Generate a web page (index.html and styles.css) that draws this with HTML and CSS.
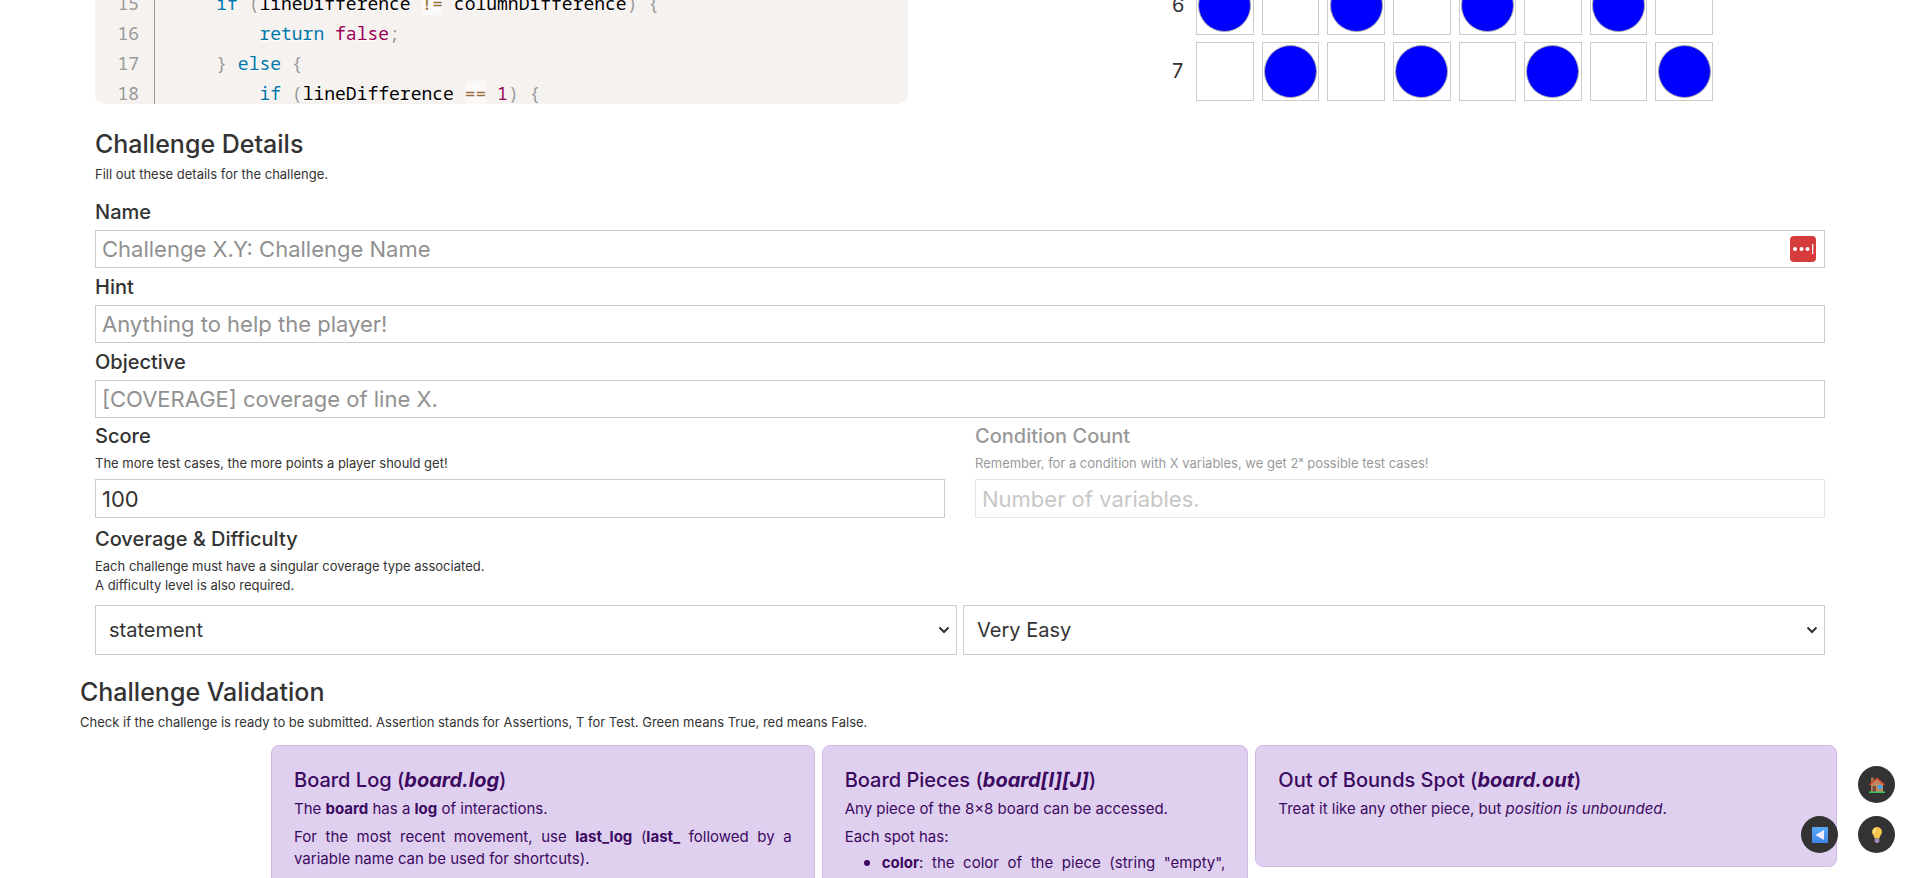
FILE: index.html
```
<!DOCTYPE html>
<html lang="en">
<head>
<meta charset="utf-8">
<title>Create Challenge</title>
<link rel="stylesheet" href="styles.css">
</head>
<body>
<main class="page">
  <section class="workspace">
    <div class="editor">
      <ol class="gutter"><li>15</li><li>16</li><li>17</li><li>18</li></ol>
<pre class="code"><code>    <span class="kw">if</span> <span class="pn">(</span>lineDifference <span class="op">!=</span> columnDifference<span class="pn">)</span> <span class="pn">{</span>
        <span class="kw">return</span> <span class="lit">false</span><span class="pn">;</span>
    <span class="pn">}</span> <span class="kw">else</span> <span class="pn">{</span>
        <span class="kw">if</span> <span class="pn">(</span>lineDifference <span class="op">==</span> <span class="lit">1</span><span class="pn">)</span> <span class="pn">{</span></code></pre>
    </div>
    <div class="board">
      <span class="row-label">6</span>
      <span class="cell"><i class="piece"></i></span><span class="cell"></span>
      <span class="cell"><i class="piece"></i></span><span class="cell"></span>
      <span class="cell"><i class="piece"></i></span><span class="cell"></span>
      <span class="cell"><i class="piece"></i></span><span class="cell"></span>
      <span class="row-label">7</span>
      <span class="cell"></span><span class="cell"><i class="piece"></i></span>
      <span class="cell"></span><span class="cell"><i class="piece"></i></span>
      <span class="cell"></span><span class="cell"><i class="piece"></i></span>
      <span class="cell"></span><span class="cell"><i class="piece"></i></span>
    </div>
  </section>

  <form class="details">
    <h2 class="title">Challenge Details</h2>
    <p class="note">Fill out these details for the challenge.</p>

    <div class="field first">
      <label class="label" for="name">Name</label>
      <div class="input-wrap">
        <input class="input" id="name" type="text" placeholder="Challenge X.Y: Challenge Name">
        <svg class="autofill" viewBox="0 0 26 26" aria-hidden="true">
          <rect width="26" height="26" rx="4" fill="#d63c3c"/>
          <circle cx="5" cy="13" r="2" fill="#fff"/><circle cx="11.500" cy="13" r="2" fill="#fff"/><circle cx="17.500" cy="13" r="2" fill="#fff"/>
          <rect x="22" y="8" width="1.300" height="10" fill="#fff"/>
        </svg>
      </div>
    </div>
    <div class="field">
      <label class="label" for="hint">Hint</label>
      <input class="input" id="hint" type="text" placeholder="Anything to help the player!">
    </div>
    <div class="field">
      <label class="label" for="objective">Objective</label>
      <input class="input" id="objective" type="text" placeholder="[COVERAGE] coverage of line X.">
    </div>
    <div class="pair">
      <div class="field">
        <label class="label" for="score">Score</label>
        <p class="note">The more test cases, the more points a player should get!</p>
        <input class="input" id="score" type="text" value="100">
      </div>
      <div class="field disabled">
        <label class="label" for="conditions">Condition Count</label>
        <p class="note">Remember, for a condition with X variables, we get 2ˣ possible test cases!</p>
        <input class="input" id="conditions" type="text" placeholder="Number of variables." disabled>
      </div>
    </div>
    <div class="levels">
      <h3 class="label">Coverage &amp; Difficulty</h3>
      <p class="note">Each challenge must have a singular coverage type associated.<br>A difficulty level is also required.</p>
      <div class="selects">
        <select class="select" aria-label="Coverage"><option>statement</option></select>
        <select class="select" aria-label="Difficulty"><option>Very Easy</option></select>
      </div>
    </div>
  </form>

  <section class="validation">
    <h2 class="title">Challenge Validation</h2>
    <p class="note">Check if the challenge is ready to be submitted. Assertion stands for Assertions, T for Test. Green means True, red means False.</p>
    <div class="cards">
      <article class="card">
        <h3 class="card-title">Board Log (<em>board.log</em>)</h3>
        <p>The <b>board</b> has a <b>log</b> of interactions.</p>
        <p>For the most recent movement, use <b>last_log</b> (<b>last_</b> followed by a variable name can be used for shortcuts).</p>
      </article>
      <article class="card">
        <h3 class="card-title">Board Pieces (<em>board[I][J]</em>)</h3>
        <p>Any piece of the 8×8 board can be accessed.</p>
        <p>Each spot has:</p>
        <ul><li><b>color</b>: the color of the piece (string "empty", "red", or "blue").</li></ul>
      </article>
      <article class="card short">
        <h3 class="card-title">Out of Bounds Spot (<em>board.out</em>)</h3>
        <p>Treat it like any other piece, but <i>position is unbounded</i>.</p>
      </article>
    </div>
  </section>
</main>

<nav class="dock" aria-label="Shortcuts">
  <button class="dock-button home" type="button" aria-label="Home">
    <svg viewBox="0 0 16 16"><path fill="#a8754f" d="M2 .5h2.500v5H2z"/><path fill="#c08a60" d="M2 7.500 8 2l6 5.500V15H2z"/><path fill="#7a4a3a" d="M3.500 9H7v6H3.500z"/><path fill="#41a6ee" d="M9 8h4v4H9z"/><path fill="none" stroke="#e2482d" stroke-width="1.500" d="M.5 8 8 1.500 15.500 8"/><path fill="#35c463" d="M0 14.500h16V16H0z"/></svg>
  </button>
  <button class="dock-button back" type="button" aria-label="Back">
    <svg viewBox="0 0 16 16"><defs><linearGradient id="sky" x2="0" y2="1"><stop stop-color="#58acf8"/><stop offset="1" stop-color="#3f85e6"/></linearGradient></defs><rect width="16" height="16" rx="1" fill="url(#sky)"/><path fill="#f1edff" d="M12 3v10L3.500 8z"/></svg>
  </button>
  <button class="dock-button idea" type="button" aria-label="Hint">
    <svg viewBox="0 0 16 16"><path fill="#f7c64b" d="M8 0a5 5 0 0 1 5 5c0 2.500-2.300 3.600-2.600 6.500H5.600C5.300 8.600 3 7.500 3 5a5 5 0 0 1 5-5z"/><path fill="#ffe79a" d="M7 1.500c-2 .3-3 2-2.500 4 .5 1.500 1.500 1 1.800-.5z"/><path fill="#a78cb8" d="M5.700 11.500h4.600v3L9 16H7l-1.300-1.500z"/></svg>
  </button>
</nav>
</body>
</html>
```

FILE: styles.css
```
* { box-sizing: border-box; }
html { height: 100%; }
body {
  margin: 0;
  height: 100%;
  overflow: hidden;
  background: #fff;
  color: #333;
  font: 16px/24px Inter, "Noto Sans", sans-serif;
}
h2, h3, p, ul, ol, pre { margin: 0; padding: 0; }

.page { padding: 0 80px; }

.workspace {
  display: grid;
  grid-template-columns: 813px 1fr;
  grid-template-rows: 104px;
  align-items: end;
  padding: 0 15px;
  gap: 30px;
}
.editor {
  display: flex;
  align-items: flex-end;
  overflow: hidden;
  height: 104px;
  border-radius: 0 0 10px 10px;
  background: #f5f2f0;
  font: 18px/30px "Noto Sans Mono", "DejaVu Sans Mono", monospace;
}
.gutter {
  list-style: none;
  width: 60px;
  margin-bottom: -4px;
  padding-right: 15px;
  border-right: 1px solid #999;
  color: #999;
  text-align: right;
}
.code {
  margin-bottom: -4px;
  padding-left: 18px;
  color: #000;
  font: inherit;
  text-shadow: 0 1px #fff;
}
.code code { font: inherit; }
.kw { color: #07a; }
.lit { color: #905; }
.pn { color: #999; }
.op { color: #9a6e3a; background: hsla(0, 0%, 100%, .5); }

.board {
  display: grid;
  grid-template-columns: 16px repeat(8, 1fr);
  grid-auto-rows: 59px;
  gap: 7px 8px;
  justify-self: end;
  width: 541px;
  margin-right: 112px;
  padding-bottom: 3px;
}
.row-label { font-size: 20px; line-height: 59px; }
.cell {
  display: grid;
  place-items: center;
  border: 1px solid #ccc;
}
.piece {
  width: 53px;
  height: 53px;
  border: 1px solid #aaa;
  border-radius: 50%;
  background: #00f;
}

.details { padding: 24px 15px 0; }
.title { font-size: 25px; font-weight: 500; line-height: 32px; }
.note { font-size: 13px; line-height: 19px; }
.title + .note { padding-top: 5px; }
.label { display: block; font-size: 20px; font-weight: 500; line-height: 24px; }
.label + .note { padding: 6px 0; }

.first { padding-top: 16px; }
.field .label { padding: 0 0 6px; }
.field + .field { padding-top: 7px; }
.field .label:has(+ .note) { padding: 0; }
.input-wrap { position: relative; }
.input {
  display: block;
  width: 100%;
  height: 38px;
  padding: 0 6px;
  border: 1px solid #ccc;
  border-radius: 0;
  background: #fff;
  color: #333;
  font: 22px/36px Inter, "Noto Sans", sans-serif;
}
.input::placeholder { color: #919191; }
.autofill {
  position: absolute;
  top: 6px;
  right: 9px;
  width: 26px;
  height: 26px;
}
.pair {
  display: grid;
  grid-template-columns: 1fr 1fr;
  gap: 30px;
  padding-top: 6px;
}
.pair .field { padding-top: 0; }
.pair .input { height: 39px; }
.disabled { opacity: .5; }
.levels { padding-top: 9px; }
.selects { display: flex; gap: 6px; padding-top: 4px; }
.select {
  flex: 1;
  height: 50px;
  padding: 0 13px;
  border: 1px solid #ccc;
  border-radius: 0;
  appearance: none;
  background: #fff url("data:image/svg+xml,%3Csvg xmlns='http://www.w3.org/2000/svg' width='12' height='8'%3E%3Cpath d='M1.500 1.500 6 6l4.500-4.500' fill='none' stroke='%23333' stroke-width='2'/%3E%3C/svg%3E") no-repeat right 6px center;
  color: #333;
  font: 20px Inter, "Noto Sans", sans-serif;
}

.validation { padding-top: 21px; }
.cards {
  display: grid;
  grid-template-columns: 544fr 427fr 582fr;
  gap: 7px;
  align-items: start;
  margin: 13px 3px 0 191px;
}
.card {
  padding: 22px 22px 24px;
  border: 1px solid #d4b8e8;
  border-radius: 8px;
  background: #e0d0f0;
  color: #3b0a60;
  font-size: 15px;
  line-height: 22px;
  text-align: justify;
}
.card-title { font-size: 20px; font-weight: 500; line-height: 24px; padding-bottom: 6px; }
.card-title em { font-weight: 700; }
.card p { padding-bottom: 6px; }
.card b { font-weight: 700; }
.card ul { margin-top: -3px; padding-left: 37px; }
.card li::marker { font-size: 18px; }
.short { min-height: 122px; }

.dock {
  position: fixed;
  right: 25px;
  bottom: 25px;
  display: grid;
  grid-template-columns: 37px 37px;
  gap: 13px 20px;
}
.dock-button {
  display: grid;
  place-items: center;
  width: 37px;
  height: 37px;
  padding: 0;
  border: 0;
  border-radius: 50%;
  background: #333;
}
.dock-button svg { width: 16px; height: 16px; }
.home { grid-column: 2; }
```
